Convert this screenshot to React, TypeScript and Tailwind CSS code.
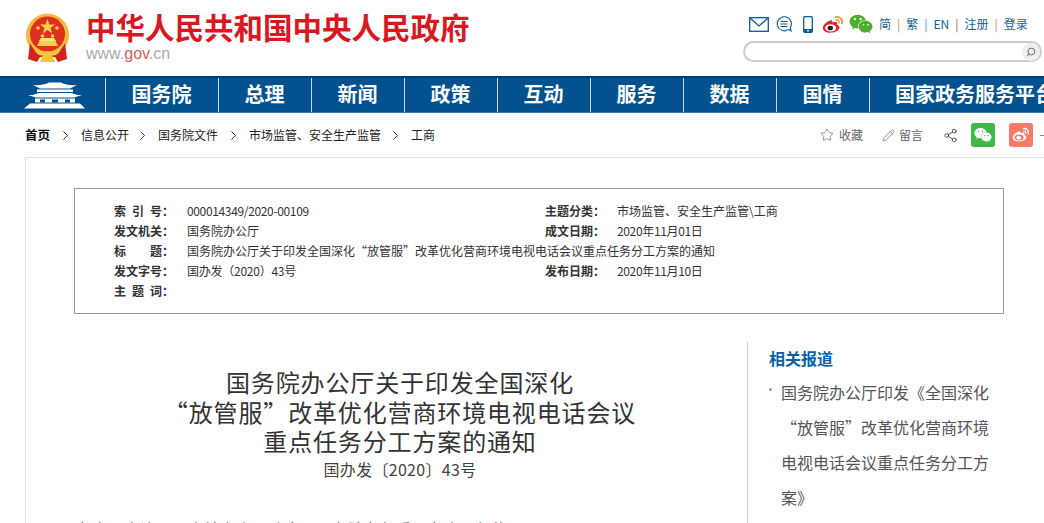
import React from 'react';
import { Star, Pencil, Share2, Search } from 'lucide-react';
import { FaWeixin } from 'react-icons/fa';

const sans = 'font-["Noto_Sans_CJK_SC","Liberation_Sans",sans-serif]';

const navItems = ['总理', '新闻', '政策', '互动', '服务', '数据', '国情'];
const crumbs = ['信息公开', '国务院文件', '市场监管、安全生产监管', '工商'];

function Emblem() {
  return (
    <svg width="46" height="50" viewBox="0 0 46 50">
      <circle cx="22.5" cy="22" r="21.5" fill="#f1bb3b" />
      <circle cx="22.5" cy="21" r="17.5" fill="#e0301e" />
      <polygon points="22.5,6 24.4,11.5 30,11.5 25.5,15 27.2,20.4 22.5,17 17.8,20.4 19.5,15 15,11.5 20.6,11.5" fill="#f7d04a" />
      <circle cx="13" cy="15" r="1.8" fill="#f7d04a" />
      <circle cx="32" cy="15" r="1.8" fill="#f7d04a" />
      <circle cx="17.5" cy="23" r="1.8" fill="#f7d04a" />
      <circle cx="27.5" cy="23" r="1.8" fill="#f7d04a" />
      <path d="M12 33 L15 27 H30 L33 33 Z" fill="#f7d04a" />
      <path d="M16 25 H29 L31 28 H14 Z" fill="#fbe08a" />
      <path d="M5 30 C8 37 14 41 22.5 41 C31 41 37 37 40 30 L42 46 L33 49 L30 44 H15 L12 49 L3 46 Z" fill="#d2231c" />
      <path d="M8 33 C12 39 17 41 22.5 38 C28 41 33 39 37 33 C34 44 28 43 22.5 42 C17 43 11 44 8 33 Z" fill="#f4c63f" />
      <path d="M18 42 H27 L30 49 H15 Z" fill="#f4c63f" />
    </svg>
  );
}

function Gate() {
  return (
    <svg width="62" height="27" viewBox="0 0 62 27" fill="#fff">
      <path d="M9 3 C14 3.5 21 3 25 0.5 H37 C41 3 48 3.5 53 3 L46 6.5 H16 Z" />
      <rect x="13" y="7.5" width="36" height="2.5" />
      <path d="M4 13 C9 13.5 12 12 14 11 H48 C50 12 53 13.5 58 13 L50 15.5 H12 Z" />
      <rect x="11" y="16.5" width="40" height="4" />
      <rect x="16" y="17.5" width="5" height="3" fill="#03528f" />
      <rect x="28" y="17.5" width="6" height="3" fill="#03528f" />
      <rect x="41" y="17.5" width="5" height="3" fill="#03528f" />
      <path d="M6 21.5 H56 L61 26.5 H0 Z" />
    </svg>
  );
}

function Weibo({ size, dark }: { size: number; dark: boolean }) {
  return (
    <svg width={size} height={size * 0.85} viewBox="0 0 24 20">
      <path d="M10 5.5 C4.5 7 0.5 11 1 14.5 C1.500 18 6 19.500 10.500 19 C16 18.500 19.500 15.500 19 12.800 C18.700 11.300 17.300 10.800 16.300 10.500 C16.900 9 16.700 7.800 15.500 7.400 C14 7 12.200 7.800 11 8.300 C11.500 6.500 11.500 5.200 10 5.500 Z" fill={dark ? '#e6262c' : '#fff'} />
      <ellipse cx="9.500" cy="13.800" rx="6" ry="4" fill={dark ? '#fff' : '#fb7a66'} />
      <ellipse cx="9" cy="14" rx="3" ry="2.500" fill={dark ? '#222' : '#fff'} />
      <path d="M15 2 C19 1 23 4.500 21.800 9" fill="none" stroke={dark ? '#f39320' : '#fff'} strokeWidth="1.800" strokeLinecap="round" />
      <path d="M15.500 5.300 C17.500 5 19 6.500 18.600 8.500" fill="none" stroke={dark ? '#f39320' : '#fff'} strokeWidth="1.500" strokeLinecap="round" />
    </svg>
  );
}

function TopIcons() {
  return (
    <div className="flex items-center text-[#0a5a9c]">
      <svg width="20" height="15" viewBox="0 0 20 15" fill="none" stroke="currentColor" strokeWidth="1.300">
        <rect x="0.700" y="0.700" width="18.600" height="13.600" />
        <path d="M1 1 L10 9 L19 1" />
      </svg>
      <svg className="ml-[7px]" width="16" height="16" viewBox="0 0 16 16" fill="none" stroke="currentColor" strokeWidth="1.100">
        <path d="M8 0.800 A7 7 0 1 0 12.500 13.400 L15 15 L14.300 11.500 A7 7 0 0 0 8 0.800 Z" />
        <path d="M4.500 5.500 H11.500 M4.500 8 H11.500 M4.500 10.500 H11.500" />
      </svg>
      <svg className="ml-[11px]" width="10" height="17" viewBox="0 0 10 17" fill="none">
        <rect x="0.700" y="0.700" width="8.600" height="15.600" rx="1" stroke="currentColor" strokeWidth="1.300" />
        <rect x="1" y="13" width="8" height="3.500" fill="currentColor" />
        <circle cx="5" cy="14.700" r="0.900" fill="#fff" />
      </svg>
      <span className="ml-[9px] flex">
        <Weibo size={22} dark />
      </span>
      <FaWeixin className="ml-[5px] text-[#4fae2e]" size={24} />
    </div>
  );
}

function Meta({ label, value, spread, valueClass }: { label?: string; value?: string; spread?: string[]; valueClass?: string }) {
  return (
    <div className="flex h-5 items-center">
      {spread ? (
        <span className="flex w-[60px] shrink-0 justify-between font-bold text-[#333]">
          {spread.map((s) => (
            <span key={s}>{s}</span>
          ))}
        </span>
      ) : (
        <span className="w-[60px] shrink-0 font-bold text-[#333]">{label}</span>
      )}
      <span className={`text-[#333] whitespace-nowrap ${valueClass ?? 'ml-[13px]'}`}>{value}</span>
    </div>
  );
}

export default function App() {
  return (
    <div className={`${sans} h-[523px] w-[1044px] overflow-hidden bg-white text-[#333]`}>
      {/* header */}
      <header className="flex h-[76px]">
        <div className="ml-[25px] mt-[13px]">
          <Emblem />
        </div>
        <div className="ml-[15px] mt-[8px]">
          <div className="text-[29.500px] font-bold leading-[37px] text-[#d9181f] whitespace-nowrap">中华人民共和国中央人民政府</div>
          <div className="font-['Liberation_Sans'] text-[16px] leading-[18px] text-[#aaa]">
            www.<span className="text-[#d0605c]">gov</span>.cn
          </div>
        </div>
        <div className="ml-auto mr-[2px] mt-[14px] w-[299px]">
          <div className="flex h-[20px] items-center pl-[6px]">
            <TopIcons />
            <div className="ml-[6px] flex items-center text-[12px] text-[#1a5f96]">
              <span>简</span>
              <span className="mx-[6px] text-[#c98b4a]">|</span>
              <span>繁</span>
              <span className="mx-[6px] text-[#3d97d3]">|</span>
              <span>EN</span>
              <span className="mx-[6px] text-[#a55b3c]">|</span>
              <span>注册</span>
              <span className="mx-[6px] text-[#c98b4a]">|</span>
              <span>登录</span>
            </div>
          </div>
          <div className="mt-[7px] flex h-[21px] items-center justify-end rounded-full border-2 border-[#ccc]">
            <span className="flex h-[18px] w-[18px] items-center justify-center rounded-full bg-[#eee]">
              <Search size={10} className="-scale-x-100 text-[#777]" strokeWidth={2.500} />
            </span>
          </div>
        </div>
      </header>

      {/* nav */}
      <nav className="flex h-[37px] border-t-2 border-b border-t-[#03406f] border-b-[#3b7bad] bg-[#03528f] text-white">
        <div className="flex w-[106px] shrink-0 items-center justify-end border-r border-[#c9d6e0] pr-[19px]">
          <Gate />
        </div>
        <div className="flex w-[113px] shrink-0 items-center justify-center border-r border-[#c9d6e0] pb-[2px] pr-[1px] text-[20px] font-bold">国务院</div>
        {navItems.map((item) => (
          <div key={item} className="flex w-[93px] shrink-0 items-center justify-center border-r border-[#c9d6e0] pb-[2px] pr-[1px] text-[20px] font-bold">
            {item}
          </div>
        ))}
        <div className="ml-[25px] flex shrink-0 items-center pb-[2px] text-[20px] font-bold whitespace-nowrap">国家政务服务平台</div>
      </nav>

      {/* breadcrumb */}
      <div className="flex h-[44px] items-center pl-[25px] pr-0 text-[12px] text-[#222]">
        <span className="text-[12.500px] font-bold text-[#111]">首页</span>
        {crumbs.map((c, i) => (
          <React.Fragment key={c}>
            <svg className="mx-[13px] shrink-0" width="5" height="9" viewBox="0 0 5 9" fill="none" stroke="#333" strokeWidth="1">
              <path d="M0.500 0.500 L4.500 4.500 L0.500 8.500" />
            </svg>
            <span className={i === 0 ? '-mr-[2px]' : i === 2 ? '-mr-[1px]' : ''}>{c}</span>
          </React.Fragment>
        ))}
        <div className="ml-auto flex items-center whitespace-nowrap text-[#666]">
          <Star size={14} strokeWidth={1.200} />
          <span className="ml-[5px]">收藏</span>
          <Pencil className="ml-[19px]" size={13} strokeWidth={1.300} />
          <span className="ml-[4px]">留言</span>
          <Share2 className="ml-[20px] text-[#333]" size={15} strokeWidth={1.300} />
          <span className="ml-[13px] flex h-6 w-6 items-center justify-center rounded-[3px] bg-[#3fb848] text-white">
            <FaWeixin size={18} />
          </span>
          <span className="ml-[14px] flex h-6 w-6 items-center justify-center rounded-[3px] bg-[#fb7a66]">
            <Weibo size={18} dark={false} />
          </span>
          <span className="ml-[7px] mr-[-4px] h-px w-[8px] bg-[#888]" />
        </div>
      </div>

      {/* content */}
      <div className="ml-[25px] h-[400px] border-t border-l border-[#ddd] pl-[48px] pt-[30px]">
        <div className="grid h-[126px] w-[930px] grid-cols-[470px_1fr] border border-[#999] pl-[39px] pt-[12px] text-[12px]">
          <div>
            <Meta spread={['索', '引', '号：']} value="000014349/2020-00109" valueClass="ml-[13px] tracking-[-0.350px]" />
            <Meta label="发文机关：" value="国务院办公厅" />
            <Meta spread={['标', '题：']} value="国务院办公厅关于印发全国深化“放管服”改革优化营商环境电视电话会议重点任务分工方案的通知" />
            <Meta label="发文字号：" value="国办发（2020）43号" valueClass="ml-[13px] tracking-[-0.250px]" />
            <Meta spread={['主', '题', '词：']} />
          </div>
          <div className="-ml-[39px]">
            <Meta label="主题分类：" value="市场监管、安全生产监管\工商" valueClass="ml-[12px]" />
            <Meta label="成文日期：" value="2020年11月01日" valueClass="ml-[12px] tracking-[-0.350px]" />
            <div className="h-5" />
            <Meta label="发布日期：" value="2020年11月10日" valueClass="ml-[12px] tracking-[-0.350px]" />
          </div>
        </div>

        <div className="mt-[28px] flex">
          <article className="w-[652px] shrink-0">
            <h1 className="pt-[25px] text-center text-[24px] font-normal leading-[29.500px] tracking-[0.860px] text-[#333]">
              国务院办公厅关于印发全国深化
              <br />
              “放管服”改革优化营商环境电视电话会议
              <br />
              重点任务分工方案的通知
            </h1>
            <p className="mt-[1px] text-center text-[16px] leading-[24px] tracking-[0.300px] text-[#444]">国办发〔2020〕43号</p>
            <p className="mt-[36px] ml-[2px] text-[16px] leading-[24px] text-[#333] whitespace-nowrap">各省、自治区、直辖市人民政府，国务院各部委、各直属机构：</p>
          </article>
          <aside className="ml-[21px] h-[200px] w-[297px] border-l border-[#ccc] pl-[21px]">
            <h2 className="text-[16px] font-bold leading-[32px] text-[#0a5fa8]">相关报道</h2>
            <div className="relative mt-[1px] w-[230px] pl-[12px] text-[16px] leading-[35px] text-[#555] whitespace-nowrap">
              <span className="absolute left-[0px] top-[13px] h-[3px] w-[3px] rounded-full bg-[#999]" />
              国务院办公厅印发《全国深化
              <br />
              “放管服”改革优化营商环境
              <br />
              电视电话会议重点任务分工方
              <br />
              案》
            </div>
          </aside>
        </div>
      </div>
    </div>
  );
}
